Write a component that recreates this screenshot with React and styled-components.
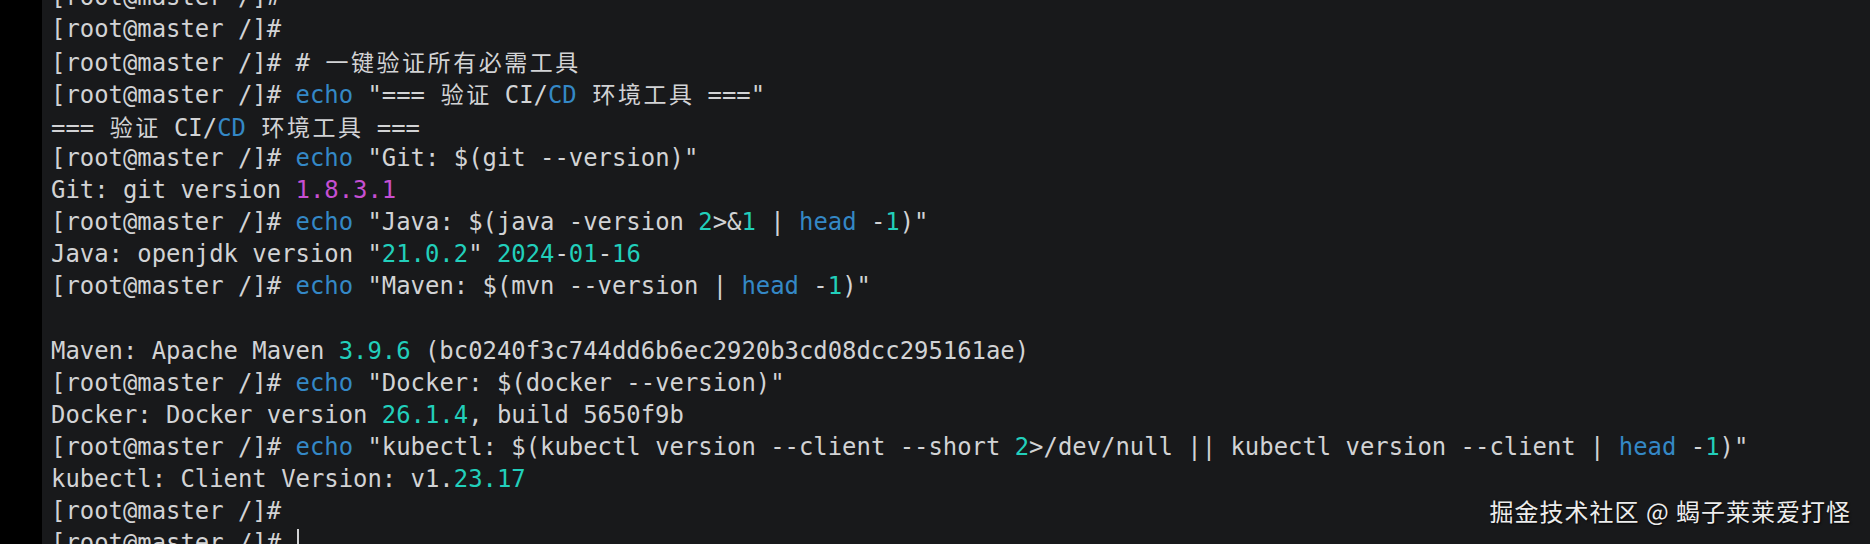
import React from "react";
import styled, { createGlobalStyle } from "styled-components";

const Global = createGlobalStyle`
  html, body { margin: 0; padding: 0; background: #18191b; overflow: hidden; }
  #root { width: 1870px; height: 544px; }
`;

const Screen = styled.div`
  position: relative;
  display: flex;
  width: 1870px;
  height: 544px;
  overflow: hidden;
  background: #18191b;
`;

const Gutter = styled.div`
  flex: 0 0 42px;
  background: #000;
`;

const Terminal = styled.div`
  flex: 1;
  display: flex;
  flex-direction: column;
  padding-left: 9px;
  margin-top: -19px;
  font-family: "DejaVu Sans Mono", "Noto Sans CJK SC", monospace;
  font-size: 23.9px;
  color: #d2d3d5;
`;

const Line = styled.div`
  flex: 0 0 32.15px;
  height: 32.15px;
  line-height: 32px;
  white-space: pre;
`;

const colors = {
  plain: "#d2d3d5",
  cmd: "#3488c6",
  num: "#22cfbb",
  ver: "#c64fd2",
};

const Tok = styled.span`
  color: ${(p) => colors[p.$kind] || colors.plain};
`;

const Wide = styled.span`
  display: inline-block;
  width: 2ch;
  text-align: center;
  font-family: "Noto Sans CJK SC", sans-serif;
  font-size: 23px;
  color: #d2d3d5;
`;

const Cursor = styled.span`
  display: inline-block;
  width: 2px;
  height: 30px;
  background: #d2d3d5;
  vertical-align: middle;
  margin-left: 1px;
`;

const Watermark = styled.div`
  position: absolute;
  right: 19px;
  bottom: 21px;
  font-family: "Noto Sans CJK SC", sans-serif;
  font-size: 24px;
  line-height: 1;
  color: #ececec;
  text-shadow: 1px 1px 2px rgba(0, 0, 0, 0.8);
  letter-spacing: 1px;
`;

const P = "[root@master /]#";
const isCJK = (ch) => /[\u3400-\u9fff]/.test(ch);

function Segment({ text, kind }) {
  const parts = [];
  let buf = "";
  Array.from(text).forEach((ch, i) => {
    if (isCJK(ch)) {
      if (buf) { parts.push(buf); buf = ""; }
      parts.push({ cjk: ch, i });
    } else buf += ch;
  });
  if (buf) parts.push(buf);
  return (
    <Tok $kind={kind}>
      {parts.map((p, i) =>
        typeof p === "string" ? p : <Wide key={i}>{p.cjk}</Wide>
      )}
    </Tok>
  );
}

const lines = [
  [[P]],
  [[P]],
  [[P + " # 一键验证所有必需工具"]],
  [[P + " "], ["echo", "cmd"], [' "=== 验证 CI/'], ["CD", "cmd"], [' 环境工具 ==="']],
  [["=== 验证 CI/"], ["CD", "cmd"], [" 环境工具 ==="]],
  [[P + " "], ["echo", "cmd"], [' "Git: $(git --version)"']],
  [["Git: git version "], ["1.8.3.1", "ver"]],
  [[P + " "], ["echo", "cmd"], [' "Java: $(java -version '], ["2", "num"], [">&"], ["1", "num"], [" | "], ["head", "cmd"], [" -"], ["1", "num"], [')"']],
  [['Java: openjdk version "'], ["21.0.2", "num"], ['" '], ["2024", "num"], ["-"], ["01", "num"], ["-"], ["16", "num"]],
  [[P + " "], ["echo", "cmd"], [' "Maven: $(mvn --version | '], ["head", "cmd"], [" -"], ["1", "num"], [')"']],
  [[""]],
  [["Maven: Apache Maven "], ["3.9.6", "num"], [" (bc0240f3c744dd6b6ec2920b3cd08dcc295161ae)"]],
  [[P + " "], ["echo", "cmd"], [' "Docker: $(docker --version)"']],
  [["Docker: Docker version "], ["26.1.4", "num"], [", build 5650f9b"]],
  [[P + " "], ["echo", "cmd"], [' "kubectl: $(kubectl version --client --short '], ["2", "num"], [">/dev/null || kubectl version --client | "], ["head", "cmd"], [" -"], ["1", "num"], [')"']],
  [["kubectl: Client Version: v1."], ["23.17", "num"]],
  [[P]],
];

export default function App() {
  return (
    <>
      <Global />
      <Screen>
        <Gutter />
        <Terminal>
          {lines.map((segs, i) => (
            <Line key={i}>
              {segs.map(([t, k], j) => (
                <Segment key={j} text={t} kind={k} />
              ))}
            </Line>
          ))}
          <Line>
            <Segment text={P + " "} />
            <Cursor />
          </Line>
        </Terminal>
        <Watermark>掘金技术社区 @ 蝎子莱莱爱打怪</Watermark>
      </Screen>
    </>
  );
}
